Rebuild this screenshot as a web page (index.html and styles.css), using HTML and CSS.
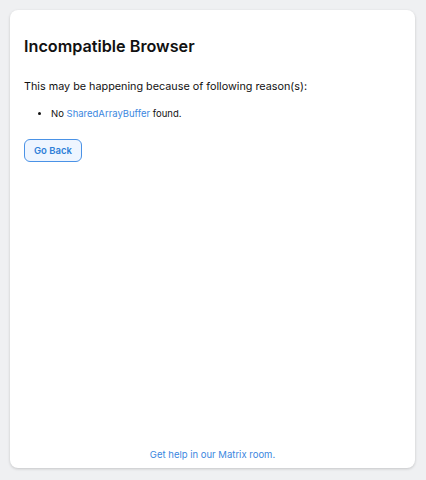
FILE: index.html
```html
<!DOCTYPE html>
<html lang="en">
  <head>
    <meta charset="UTF-8" />
    <title>Incompatible Browser</title>
    <link rel="stylesheet" href="styles.css">
  </head>
  <body>
    <div class="card">
      <div class="content">
        <h1>Incompatible Browser</h1>
        <p class="lead">This may be happening because of following reason(s):</p>
        <ul class="reasons">
          <li>No <a href="#">SharedArrayBuffer</a> found.</li>
        </ul>
        <div>
          <a href="#" class="btn">Go Back</a>
        </div>
      </div>
      <div class="footer">
        <a href="#">Get help in our Matrix room.</a>
      </div>
    </div>
  </body>
</html>
```

FILE: styles.css
```css
* {
  margin: 0;
  padding: 0;
  box-sizing: border-box;
}

body {
  font-family: Inter, "Noto Sans", sans-serif;
  background-color: #eff0f2;
  color: #111111;
  padding: 10px 11px 12px 10px;
  height: 100vh;
}

a {
  color: #3b87e0;
  text-decoration: none;
}

.card {
  display: flex;
  flex-direction: column;
  height: 100%;
  background-color: #ffffff;
  border-radius: 8px;
  box-shadow: 0 1px 3px rgba(0, 0, 0, 0.18);
  padding: 26px 14px 5px 14px;
}

.content {
  flex: 1;
}

h1 {
  font-size: 16.2px;
  font-weight: 600;
  line-height: 20px;
}

.lead {
  font-size: 10.8px;
  line-height: 16px;
  margin-top: 23px;
}

.reasons {
  font-size: 9.5px;
  line-height: 14px;
  margin-top: 12px;
  padding-left: 27px;
}

.btn {
  display: inline-block;
  margin-top: 18px;
  padding: 4px 9px;
  font-size: 9.5px;
  font-weight: 600;
  line-height: 13px;
  color: #2f7fd8;
  background-color: #eef5ff;
  border: 1px solid #4a92e6;
  border-radius: 6px;
}

.footer {
  text-align: center;
  font-size: 9.5px;
  line-height: 16px;
}
```
